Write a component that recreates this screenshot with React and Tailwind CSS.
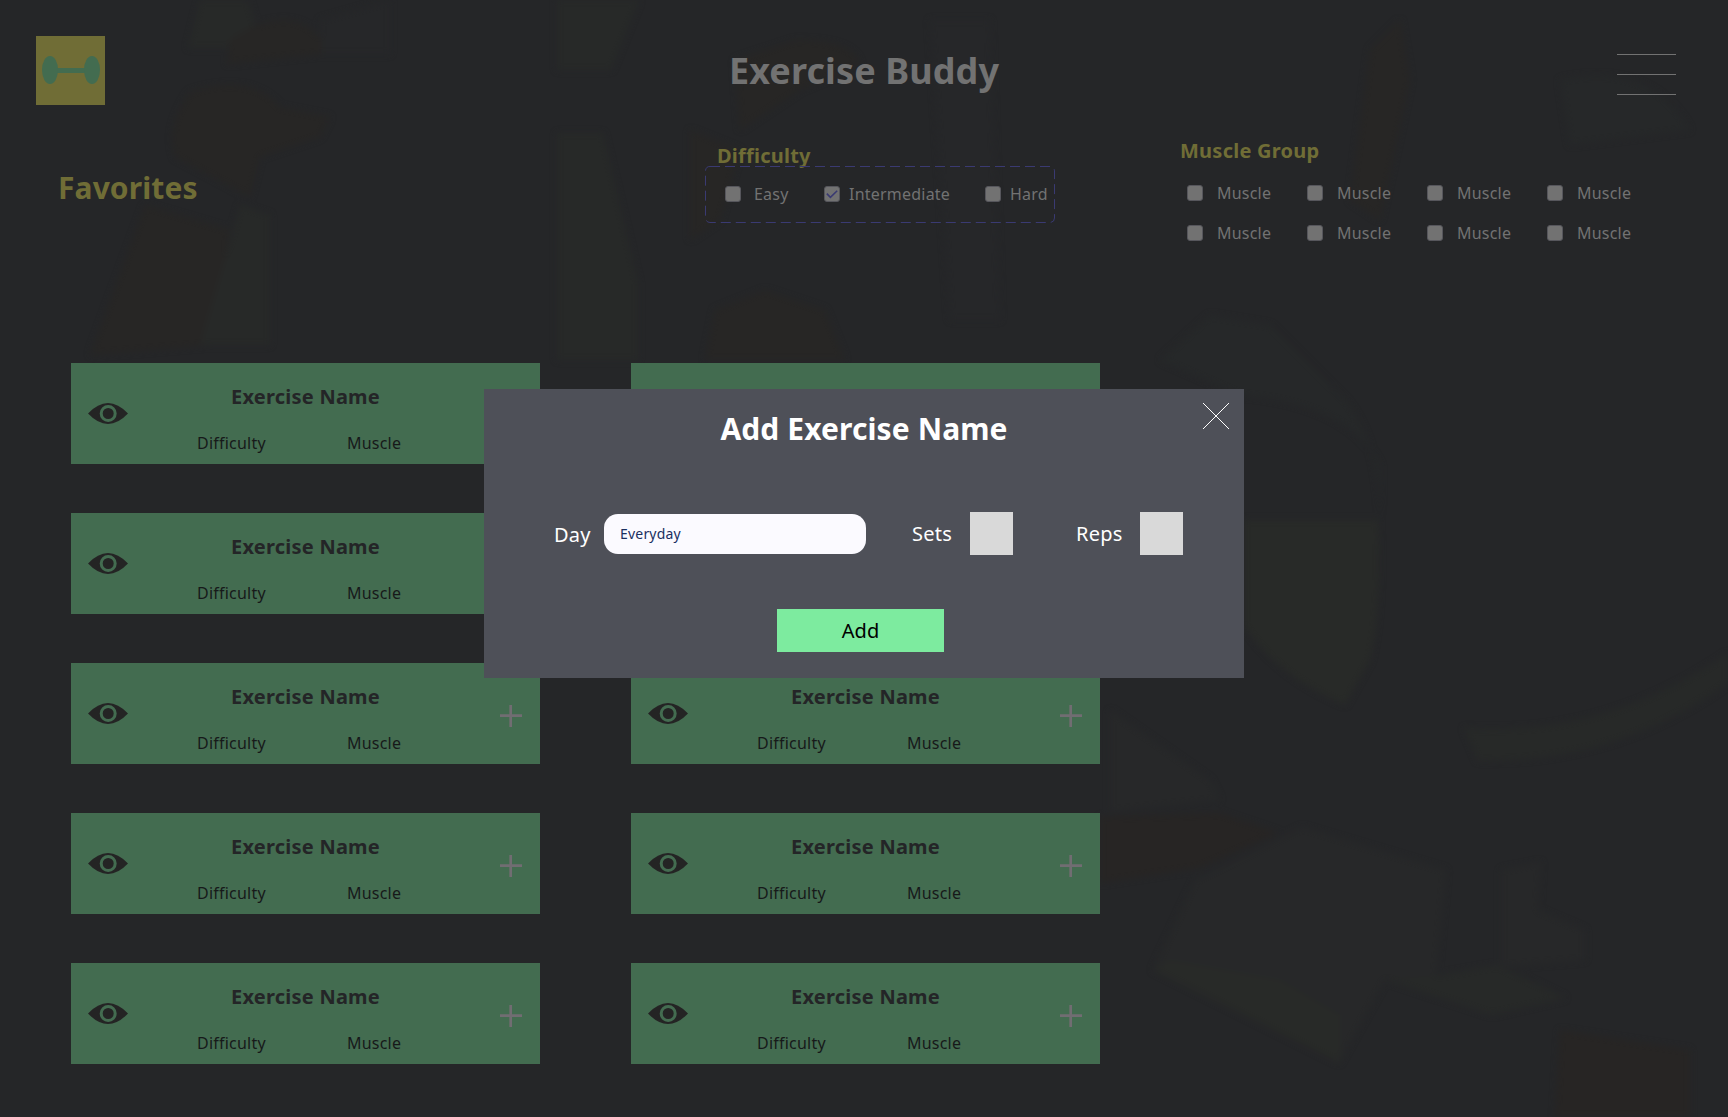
const CARDS = Array.from({ length: 10 }, (_, i) => i);
const MUSCLES = Array.from({ length: 8 }, (_, i) => i);

function Backdrop() {
  return (
    <svg className="absolute inset-0 h-full w-full" viewBox="0 0 1728 1117" preserveAspectRatio="none" aria-hidden="true">
      <defs>
        <filter id="soft" x="-5%" y="-5%" width="110%" height="110%" colorInterpolationFilters="sRGB">
          <feGaussianBlur stdDeviation="3" />
        </filter>
      </defs>
      <g filter="url(#soft)">
        <path d="M200 0h48l8 26-22 22h-46z" fill="#272928" />
        <path d="M320 20l70-20v54h-70z" fill="#262729" />
        <path d="M230 40q60-40 92 0v14l-95 10zM190 92q60-20 90 15l50 10-10 20-60 20-10 40-75-40q-10-30 15-65z" fill="#272625" />
        <path d="M145 205l85 25-20 115-120 10z" fill="#272625" />
        <path d="M240 205l30 10v130h-70z" fill="#272928" />
        <path d="M557 0h82l-28 70h-54zM557 133h46l35 150v77h-81z" fill="#272928" />
        <path d="M735 60l60-20q60 0 65 25l-60 25-60 40zM690 130l50 20-20 70-30 20z" fill="#272625" />
        <path d="M705 360l10-50 50-20 60 20 20 50z" fill="#272625" />
        <path d="M930 20h60l10 300h-50z" fill="#262729" />
        <path d="M1370 50l30-30 10 60-30 140-30-20z" fill="#272625" />
        <path d="M1560 80q90-20 130 50l-120 15z" fill="#262829" />
        <path d="M1160 360l50-45 60 10 60 60q50 40 50 140v-60q-30-60-140-70z" fill="#262829" />
        <path d="M1244 520h134q4 90-8 140l-25 45q-70-30-101-80z" fill="#282a28" />
        <path d="M1464 728q140 10 264-75v30q-110 80-250 78z" fill="#272928" />
        <path d="M1110 710l100 70 10 20-110 12z" fill="#272829" />
        <path d="M1100 817l120-4 59 20-80 35-99 15z" fill="#272524" />
        <path d="M1195 880l107-53 144 43-10 107-51 3-46 83-186-93z" fill="#272829" />
        <path d="M1170 960l110 20 60 35v48l-187-93z" fill="#282a28" />
        <path d="M1501 870l40-8-3 48 47 20v30l-84 7z" fill="#272829" />
        <path d="M1441 975l56-10 69 33-74 17-107-35z" fill="#272928" />
        <path d="M1560 1030l130 20v67h-135z" fill="#272524" />
      </g>
    </svg>
  );
}

function Logo() {
  return (
    <svg className="size-[69px] shrink-0" viewBox="0 0 69 69">
      <rect width="69" height="69" fill="#706d36" />
      <rect x="20" y="32" width="30" height="5" fill="#436c50" />
      <ellipse cx="14" cy="34" rx="8" ry="14" fill="#436c50" />
      <ellipse cx="56" cy="34" rx="8" ry="14" fill="#436c50" />
    </svg>
  );
}

function Box({ checked }) {
  return (
    <span className="flex size-4 shrink-0 items-center justify-center rounded-[3px] border border-[#56565c] bg-[#727272]">
      {checked && (
        <svg className="h-3 w-3" viewBox="0 0 12 12" fill="none" stroke="#3a3a72" strokeWidth="1.6">
          <path d="M0.8 5.6l3.6 3.7 6.800-6.600" />
        </svg>
      )}
    </span>
  );
}

function Card() {
  return (
    <article className="relative flex h-[101px] flex-col bg-[#436c50] pt-[20px]">
      <h3 className="text-center text-[20px] leading-7 font-bold tracking-[0.23px] text-[#242527]">Exercise Name</h3>
      <div className="mt-[20px] grid grid-cols-[150px_1fr] pl-[126px] text-[16px] leading-6 tracking-[0.22px] text-[#17191a]">
        <span>Difficulty</span>
        <span>Muscle</span>
      </div>
      <svg className="absolute top-[39px] left-[17px] h-[23px] w-10" viewBox="0 0 40 23">
        <path d="M0 11.5Q10 1 20 1t20 10.500Q30 22 20 22T0 11.500z" fill="#242424" />
        <circle cx="20.200" cy="11.500" r="7" fill="#242424" stroke="#436c50" strokeWidth="3" />
      </svg>
      <svg className="absolute top-[42px] left-[429px] size-[22px]" viewBox="0 0 22 22" stroke="#716d72" strokeWidth="2.700">
        <path d="M0 10.700h22M10.700 0v22" />
      </svg>
    </article>
  );
}

function Modal() {
  return (
    <div className="absolute inset-0 flex items-start justify-center pt-[389px]">
      <section className="relative h-[289px] w-[760px] bg-[#4e5058] pt-[20px] text-white">
        <h2 className="text-center text-[30px] leading-10 font-bold tracking-[0.1px]">Add Exercise Name</h2>
        <svg className="absolute top-[13px] right-[14px] size-7" viewBox="0 0 28 28" stroke="#ffffff" strokeWidth="1">
          <path d="M1 1l26 26M27 1L1 27" />
        </svg>
        <div className="mt-[63px] flex h-[43px] items-center pl-[70px] text-[20px] leading-7 tracking-[0.25px]">
          <span className="relative top-px w-[50px]">Day</span>
          <div className="flex h-10 w-[262px] items-center rounded-[14px] bg-[#fbfaff] pl-4 text-[14px] tracking-[0.2px] text-[#1a2f5f]">
            Everyday
          </div>
          <span className="ml-[46px] w-[58px]">Sets</span>
          <span className="size-[43px] bg-[#d9d9d9]" />
          <span className="ml-[63px] w-[64px]">Reps</span>
          <span className="size-[43px] bg-[#d9d9d9]" />
        </div>
        <button className="mt-[54px] ml-[293px] flex h-[43px] w-[167px] items-center justify-center bg-[#7deb9f] text-[20px] leading-7 text-black">
          Add
        </button>
      </section>
    </div>
  );
}

export default function App() {
  return (
    <div className="relative h-[1117px] w-[1728px] overflow-hidden bg-[#252628] font-['Noto_Sans',sans-serif]">
      <Backdrop />
      <div className="relative">
        <header className="grid h-[141px] grid-cols-[1fr_auto_1fr] items-start px-9 pt-9">
          <Logo />
          <h1 className="mt-[13px] text-[36px] leading-[44px] font-bold tracking-[0.1px] text-[#727272]">Exercise Buddy</h1>
          <div className="mt-[18px] mr-4 flex w-[59px] flex-col gap-[19px] justify-self-end">
            <span className="h-px bg-[#727272]" />
            <span className="h-px bg-[#727272]" />
            <span className="h-px bg-[#727272]" />
          </div>
        </header>
        <div className="flex h-[222px] items-start pl-[58px] text-[16px] leading-6 tracking-[0.22px] text-[#727272]">
          <h2 className="mt-[27px] w-[647px] text-[30px] leading-10 font-bold tracking-[0.1px] text-[#706d36]">Favorites</h2>
          <div className="w-[474px]">
            <h3 className="mt-px pl-3 text-[20px] leading-7 font-bold tracking-[0.23px] text-[#706d36]">Difficulty</h3>
            <div className="relative -mt-1 flex h-[57px] w-[350px] items-center pb-px pl-5">
              <svg className="absolute inset-0 h-full w-full" viewBox="0 0 350 57" fill="none" stroke="#3a3a72">
                <rect x="0.500" y="0.500" width="349" height="56" rx="4.500" strokeDasharray="10 5" />
              </svg>
              <Box />
              <span className="ml-[13px] w-[70px]">Easy</span>
              <Box checked />
              <span className="ml-[9px] w-[136px]">Intermediate</span>
              <Box />
              <span className="ml-[9px]">Hard</span>
            </div>
          </div>
          <div className="-mt-[4px]">
            <h3 className="pl-px text-[20px] leading-7 font-bold tracking-[0.25px] text-[#706d36]">Muscle Group</h3>
            <div className="mt-[16px] grid grid-cols-4 gap-y-4 pl-2">
              {MUSCLES.map((i) => (
                <div key={i} className="flex w-[120px] items-center gap-[14px]">
                  <Box />
                  <span>Muscle</span>
                </div>
              ))}
            </div>
          </div>
        </div>
        <main className="grid grid-cols-[469px_469px] gap-x-[91px] gap-y-[49px] pl-[71px]">
          {CARDS.map((i) => (
            <Card key={i} />
          ))}
        </main>
      </div>
      <Modal />
    </div>
  );
}
